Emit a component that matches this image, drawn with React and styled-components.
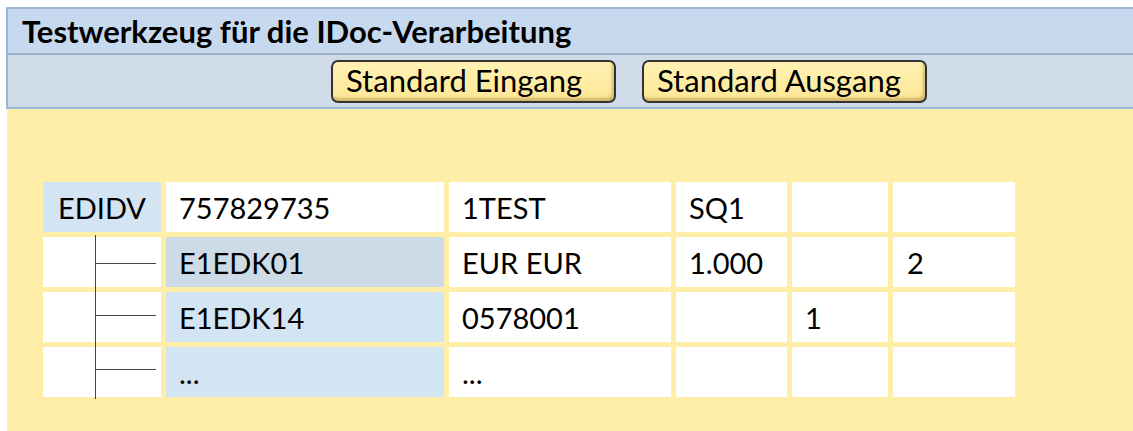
import React from 'react';
import styled, { createGlobalStyle } from 'styled-components';

const GlobalStyle = createGlobalStyle`
  body {
    margin: 0;
    background: #ffffff;
    font-family: Lato, "Open Sans", sans-serif;
    color: #000;
  }
`;

const Page = styled.div`
  padding: 7px 0 0 6px;
  height: 431px;
  box-sizing: border-box;
  overflow: hidden;
  display: flex;
  flex-direction: column;
`;

const Header = styled.div`
  border: 2px solid #9ab7d5;
  border-right: none;
`;

const TitleBar = styled.div`
  height: 44px;
  background: #c6d9ee;
  border-bottom: 2px solid #9ab5d0;
  display: flex;
  align-items: center;
  padding-left: 14px;
  font-weight: 700;
  font-size: 31px;
`;

const Toolbar = styled.div`
  height: 52px;
  background: #cfdce7;
  display: flex;
  align-items: flex-start;
  gap: 26px;
  padding: 5px 0 0 323px;
  box-sizing: border-box;
`;

const Button = styled.button`
  width: 285px;
  height: 43px;
  box-sizing: border-box;
  border: 2px solid #333;
  border-radius: 7px;
  background: linear-gradient(#fff2b3, #fde795);
  box-shadow: inset -2px -3px 3px rgba(120, 90, 20, 0.35);
  font-family: Lato, "Open Sans", sans-serif;
  font-size: 31px;
  line-height: 1;
  text-align: left;
  padding: 0 0 2px 13px;
  color: #000;
`;

const Body = styled.div`
  flex: 1;
  background: #ffeea8;
  margin-left: 1px;
  padding: 73px 0 0 36px;
`;

const Table = styled.div`
  display: grid;
  grid-template-columns: 118px 278px 222px 111px 96px 122px;
  grid-auto-rows: 50px;
  column-gap: 5px;
  row-gap: 5px;
  width: max-content;
`;

const Cell = styled.div`
  position: relative;
  background: ${(p) => p.bg || '#ffffff'};
  display: flex;
  align-items: center;
  padding-left: ${(p) => p.pad || 13}px;
  font-size: 29px;
  white-space: nowrap;
`;

const TreeCell = styled.div`
  position: relative;
  background: #ffffff;

  &::before {
    content: '';
    position: absolute;
    left: 52px;
    top: -2px;
    bottom: ${(p) => (p.last ? -2 : -5)}px;
    width: 1px;
    background: #444;
  }

  &::after {
    content: '';
    position: absolute;
    left: 52px;
    top: ${(p) => p.branch}px;
    width: 61px;
    height: 1px;
    background: #444;
  }
`;

const BLUE = '#d3e4f3';
const GREY = '#cddbe6';

const rows = [
  { branch: 26, name: 'E1EDK01', bg: GREY, cells: ['EUR EUR', '1.000', '', '2'] },
  { branch: 23, name: 'E1EDK14', bg: BLUE, cells: ['0578001', '', '1', ''] },
  { branch: 22, name: '...', bg: BLUE, cells: ['...', '', '', ''] },
];

export default function App() {
  return (
    <>
      <GlobalStyle />
      <Page>
        <Header>
          <TitleBar>Testwerkzeug für die IDoc-Verarbeitung</TitleBar>
          <Toolbar>
            <Button>Standard Eingang</Button>
            <Button>Standard Ausgang</Button>
          </Toolbar>
        </Header>
        <Body>
          <Table>
            <Cell bg={BLUE} pad={15}>EDIDV</Cell>
            <Cell>757829735</Cell>
            <Cell>1TEST</Cell>
            <Cell>SQ1</Cell>
            <Cell />
            <Cell />
            {rows.map((row, i) => (
              <React.Fragment key={row.name + i}>
                <TreeCell branch={row.branch} last={i === rows.length - 1} />
                <Cell bg={row.bg}>{row.name}</Cell>
                {row.cells.map((c, j) => (
                  <Cell key={j} pad={j === 3 ? 14 : 13}>{c}</Cell>
                ))}
              </React.Fragment>
            ))}
          </Table>
        </Body>
      </Page>
    </>
  );
}
